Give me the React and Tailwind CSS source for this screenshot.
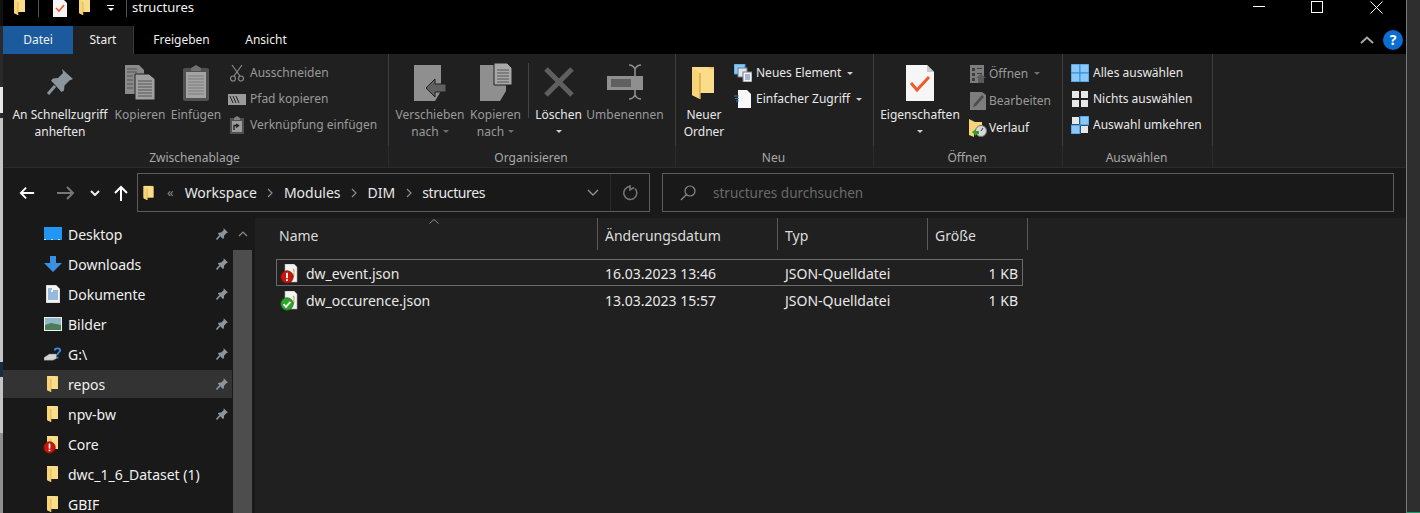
const font = { fontFamily: '"Noto Sans", sans-serif' };

function Folder({ size = 18, className = '' }) {
  return (
    <svg width={size} height={size} viewBox="0 0 18 18" className={className}>
      <path d="M3 1h11v13H3z" fill="#f0c75e" />
      <path d="M3 1h8l1 1v0H14v12H7v3L3 15z" fill="#fbdc8a" />
      <path d="M3 1l4 3v13l-4-2z" fill="#f6d477" />
      <path d="M7 4v13" stroke="#d9ab45" strokeWidth="0.7" />
    </svg>
  );
}

function StatusBadge() {
  return (
    <svg width="13" height="13" viewBox="0 0 14 14">
      <circle cx="7" cy="7" r="6.2" fill="#c4170d" stroke="#7d0f08" strokeWidth="0.8" />
      <rect x="6.1" y="2.8" width="1.8" height="5.4" fill="#fff" />
      <rect x="6.1" y="9.2" width="1.8" height="1.8" fill="#fff" />
    </svg>
  );
}

function JsonFile({ ok }) {
  return (
    <div className="w-[20px] h-[20px] flex items-end">
      <svg width="20" height="20" viewBox="0 0 20 20" className="block">
        <path d="M5 0h9l3 3v15H5z" fill="#f4f4f4" stroke="#a9a9a9" strokeWidth="0.6" />
        <path d="M13 5c1.5 1 1.5 2 1 3.5M13.5 9c1 1 .5 3-.5 4" stroke="#b8a545" strokeWidth="1.1" fill="none" />
        <g transform="translate(0 6)">
          {ok ? (
            <>
              <circle cx="7" cy="7" r="6.2" fill="#2ea62e" stroke="#1a6e1a" strokeWidth="0.8" />
              <path d="M3.6 7.2l2.4 2.6 4.4-5" stroke="#fff" strokeWidth="1.8" fill="none" />
            </>
          ) : (
            <>
              <circle cx="7" cy="7" r="6.2" fill="#c4170d" stroke="#7d0f08" strokeWidth="0.8" />
              <rect x="6.1" y="2.8" width="1.8" height="5.4" fill="#fff" />
              <rect x="6.1" y="9.2" width="1.8" height="1.8" fill="#fff" />
            </>
          )}
        </g>
      </svg>
    </div>
  );
}

function PinSmall() {
  return (
    <svg width="14" height="14" viewBox="0 0 14 14">
      <path d="M8.5 1l4.5 4.5-1.4.6-2.6 2.6-.1 2.6-1 .7L2.9 6.7l.7-1 2.6-.1L8.8 3z" fill="#8b959d" />
      <path d="M5 8.5L1.5 12.5" stroke="#8b959d" strokeWidth="1.6" />
    </svg>
  );
}

function Caret({ color = '#d0d0d0' }) {
  return <span className="inline-block w-0 h-0 border-x-[3.5px] border-x-transparent border-t-[3.5px]" style={{ borderTopColor: color }} />;
}

function Group({ width, label, children }) {
  return (
    <div className="flex flex-col h-full" style={{ width }}>
      <div className="h-[92px] flex border-r border-[#3d3d3d] pt-[3px]">{children}</div>
      <div className="flex-1 border-r border-[#2b2b2b] flex items-center justify-center text-[12px] text-[#a8a8a8] pt-[3px] pr-[2px]">{label}</div>
    </div>
  );
}

function BigButton({ width, icon, lines, dim, caret, ml = 0 }) {
  const color = dim ? 'text-[#9a9a9a]' : 'text-[#e8e8e8]';
  return (
    <div className={`flex flex-col items-center text-[12px] leading-[17px] shrink-0 ${color}`} style={{ width, marginLeft: ml }}>
      <div className="h-[49px] flex items-center justify-center">{icon}</div>
      <div className="whitespace-nowrap">{lines[0]}</div>
      {lines[1] && (
        <div className="whitespace-nowrap flex items-center gap-[4px]">
          {lines[1]}
          {caret && <Caret color="#6e6e6e" />}
        </div>
      )}
      {!lines[1] && caret && <div className="h-[17px] flex items-center"><Caret /></div>}
    </div>
  );
}

function SmallRow({ icon, text, dim, caret, gap = 4, tall }) {
  return (
    <div className={`${tall ? 'h-[27px]' : 'h-[26px]'} flex items-center whitespace-nowrap text-[12px] ${dim ? 'text-[#9a9a9a]' : 'text-[#e8e8e8]'}`}>
      <span className="w-[18px] flex justify-center shrink-0" style={{ marginRight: gap }}>{icon}</span>
      {text}
      {caret && <span className="ml-[6px] flex items-center"><Caret color={dim ? '#6e6e6e' : '#d0d0d0'} /></span>}
    </div>
  );
}

const SelectGrid = ({ fills }) => (
  <svg width="18" height="18" viewBox="0 0 18 18">
    <rect width="18" height="18" fill={fills.some(Boolean) ? '#3b9ae6' : 'none'} opacity={fills.every(Boolean) ? 1 : 0} />
    {[[1, 1], [10, 1], [1, 10], [10, 10]].map(([x, y], i) => (
      <rect key={i} x={x - (fills[i] ? 1 : 0)} y={y - (fills[i] ? 1 : 0)} width={fills[i] ? 9 : 7} height={fills[i] ? 9 : 7} fill={fills[i] ? '#8cc8f5' : '#e8e8e8'} stroke={fills[i] ? '#2f8fe0' : 'none'} />
    ))}
  </svg>
);

function Ribbon() {
  return (
    <div className="h-[114px] bg-[#202020] flex border-b border-[#2b2b2b]">
      <Group width={386} label="Zwischenablage">
        <BigButton
          width={112}
          ml={1}
          lines={['An Schnellzugriff', 'anheften']}
          icon={
            <svg width="28" height="28" viewBox="0 0 28 28">
              <path d="M16 1l11 10-3.5 1.5-5 5-.5 5-2.5 1.500L5 12.500 7 10.500l5-.5 5-5z" fill="#8b959d" />
              <path d="M9 18L2 26" stroke="#8b959d" strokeWidth="3" />
            </svg>
          }
        />
        <BigButton
          width={48}
          dim
          lines={['Kopieren']}
          icon={
            <svg width="30" height="36" viewBox="0 0 30 36" className="mt-[2px]">
              <path d="M0 0h14l5 5v24H0z" fill="#8a8a8a" />
              <path d="M10 9h14l6 5v21H10z" fill="#a0a0a0" stroke="#202020" />
              <path d="M2 4h10M2 7h10M2 11h6M2 15h6M2 19h6M2 23h6M13 16h14M13 19h14M13 22h14M13 25h14M13 28h14M13 31h14" stroke="#555" />
            </svg>
          }
        />
        <BigButton
          width={64}
          dim
          lines={['Einfügen']}
          icon={
            <svg width="26" height="36" viewBox="0 0 26 36" className="mt-[2px]">
              <rect y="3" width="26" height="33" rx="2" fill="#505050" />
              <path d="M8 3l5-3 5 3v3H8z" fill="#707070" />
              <rect x="3" y="7" width="20" height="26" fill="#a4a4a4" />
              <path d="M5 11h16M5 14h16M5 17h16M5 20h16M5 23h16M5 26h16M5 29h16" stroke="#7b7b7b" />
            </svg>
          }
        />
        <div className="pt-[3px]">
          <SmallRow
            dim
            text="Ausschneiden"
            icon={
              <svg width="14" height="18" viewBox="0 0 14 18" fill="none" stroke="#8a8a8a" strokeWidth="1.200">
                <path d="M2 1l8 11M12 1L4 12" />
                <circle cx="3" cy="14.500" r="2.500" />
                <circle cx="11" cy="14.500" r="2.500" />
              </svg>
            }
          />
          <SmallRow
            dim
            text="Pfad kopieren"
            icon={
              <svg width="18" height="11" viewBox="0 0 18 11">
                <rect width="18" height="11" fill="#9a9a9a" />
                <path d="M2 2l3 7M5 2l3 7M8 2l3 7" stroke="#222" strokeWidth="1" />
              </svg>
            }
          />
          <SmallRow
            dim
            text="Verknüpfung einfügen"
            icon={
              <svg width="14" height="18" viewBox="0 0 14 18">
                <rect y="2" width="14" height="16" fill="#505050" />
                <path d="M4 2l3-2 3 2v2H4z" fill="#808080" />
                <rect x="2" y="5" width="10" height="11" fill="#9c9c9c" />
                <path d="M4 14V9.500h4M6 8l2.500 1.500L6 11.500" stroke="#222" strokeWidth="1.400" fill="none" />
              </svg>
            }
          />
        </div>
      </Group>
      <Group width={287} label="Organisieren">
        <BigButton
          width={72}
          ml={5}
          dim
          caret
          lines={['Verschieben', 'nach']}
          icon={
            <svg width="32" height="36" viewBox="0 0 32 36" className="mt-[2px]">
              <path d="M0 0h27v26l-6 10H0z" fill="#8f8f8f" />
              <path d="M12 23l9-9v5h11v8H21v5z" fill="#606060" stroke="#1f1f1f" />
            </svg>
          }
        />
        <BigButton
          width={59}
          dim
          caret
          lines={['Kopieren', 'nach']}
          icon={
            <svg width="32" height="38" viewBox="0 0 32 38">
              <path d="M0 2h26v26l-6 10H0z" fill="#8f8f8f" />
              <path d="M14 0h13l5 5v17H14z" fill="#a8a8a8" stroke="#202020" />
              <path d="M17 7h12M17 10h12M17 13h12M17 16h12M17 19h12" stroke="#555" />
            </svg>
          }
        />
        <div className="w-px h-[55px] mt-[6px] bg-[#454545] mx-[3px] shrink-0" />
        <BigButton
          width={53}
          caret
          lines={['Löschen']}
          icon={
            <svg width="30" height="30" viewBox="0 0 30 30">
              <path d="M2 2l26 26M28 2L2 28" stroke="#5f5f5f" strokeWidth="5" />
            </svg>
          }
        />
        <BigButton
          width={80}
          dim
          lines={['Umbenennen']}
          icon={
            <svg width="36" height="36" viewBox="0 0 36 36" className="mt-[1px]">
              <rect y="12" width="36" height="14" fill="#8f8f8f" />
              <rect x="4" y="15" width="20" height="8" fill="#606060" />
              <path d="M22 1c4 0 5 2 6 4 1-2 2-4 6-4M28 5v28M22 35c4 0 5-2 6-4 1 2 2 4 6 4" stroke="#8f8f8f" strokeWidth="1.600" fill="none" />
            </svg>
          }
        />
      </Group>
      <Group width={198} label="Neu">
        <BigButton width={56} lines={['Neuer', 'Ordner']} icon={<Folder size={36} className="mt-[2px]" />} />
        <div className="ml-[2px] pt-[3px]">
          <SmallRow
            text="Neues Element"
            caret
            icon={
              <svg width="18" height="18" viewBox="0 0 18 18">
                <rect width="11" height="10" fill="#8cc8f5" stroke="#3b9ae6" />
                <rect x="4" y="4" width="9" height="9" fill="#d8e8f5" stroke="#7a7a7a" />
                <rect x="9" y="8" width="9" height="10" fill="#f4f4f4" stroke="#7a7a7a" />
                <path d="M11 11h5M11 13h5M11 15h5" stroke="#5577aa" />
              </svg>
            }
          />
          <SmallRow
            text="Einfacher Zugriff"
            caret
            icon={
              <svg width="18" height="18" viewBox="0 0 18 18">
                <path d="M4 0h9l4 4v14H4z" fill="#f8f8f8" />
                <path d="M0 6h5M1 8.500h4M2 11h3" stroke="#2a80d8" strokeWidth="1.200" />
              </svg>
            }
          />
        </div>
      </Group>
      <Group width={189} label="Öffnen">
        <BigButton
          width={92}
          caret
          lines={['Eigenschaften']}
          icon={
            <svg width="28" height="36" viewBox="0 0 28 36" className="mt-[2px]">
              <path d="M0 0h21l7 7v29H0z" fill="#f6f6f6" />
              <path d="M21 0v7h7z" fill="#c8c8c8" />
              <path d="M5 18l6 7 12-13" stroke="#ef5b25" strokeWidth="3" fill="none" />
            </svg>
          }
        />
        <div className="ml-[3px] pt-[3px]">
          <SmallRow
            dim
            tall
            text="Öffnen"
            caret
            gap={2}
            icon={
              <svg width="16" height="18" viewBox="0 0 16 18">
                <rect width="14" height="18" fill="#7d7d7d" />
                <path d="M2 3h3v3H2zM7 3h5v1H7zM2 8h3v3H2zM7 8h5v1H7zM2 13h3v3H2z" fill="#3d3d3d" />
                <path d="M8 18v-5H6l5-4 5 4h-2v5z" fill="#5a5a5a" />
              </svg>
            }
          />
          <SmallRow
            dim
            tall
            text="Bearbeiten"
            gap={2}
            icon={
              <svg width="16" height="18" viewBox="0 0 16 18">
                <path d="M0 0h12l4 3v15H0z" fill="#7d7d7d" />
                <path d="M3 15l1-3 8-9 2 2-8 9z" fill="#4d4d4d" />
              </svg>
            }
          />
          <SmallRow
            tall
            text="Verlauf"
            gap={2}
            icon={
              <svg width="18" height="18" viewBox="0 0 18 18">
                <path d="M0 0l6 3h7v12H5v3l-5-2z" fill="#f6d477" />
                <circle cx="12" cy="12" r="5.500" fill="#d8d8d8" stroke="#777" />
                <path d="M12 12l2-3" stroke="#333" />
                <path d="M3 13l4-3v2h3v3H7v2z" fill="#33a02c" />
              </svg>
            }
          />
        </div>
      </Group>
      <Group width={150} label="Auswählen">
        <div className="ml-[8px] pt-[3px]">
          <SmallRow text="Alles auswählen" icon={<SelectGrid fills={[1, 1, 1, 1]} />} />
          <SmallRow text="Nichts auswählen" icon={<SelectGrid fills={[0, 0, 0, 0]} />} />
          <SmallRow text="Auswahl umkehren" icon={<SelectGrid fills={[0, 1, 1, 0]} />} />
        </div>
      </Group>
    </div>
  );
}

function TitleBar() {
  return (
    <div className="h-[26px] bg-black flex items-start overflow-hidden text-white">
      <div className="ml-[8px] -mt-[2px]"><Folder size={18} /></div>
      <div className="ml-[9px] w-px h-[17px] bg-[#555]" />
      <svg width="14" height="18" viewBox="0 0 14 18" className="ml-[14px] -mt-[1px] shrink-0">
        <path d="M0 0h10l4 4v14H0z" fill="#f4f4f4" />
        <path d="M3 9l3 3 5-6" stroke="#ef5b25" strokeWidth="1.600" fill="none" />
      </svg>
      <div className="ml-[9px] -mt-[2px]"><Folder size={18} /></div>
      <div className="ml-[13px] mt-[5px] flex flex-col items-center w-[7px]">
        <div className="w-[7px] h-px bg-white mb-[2px]" />
        <Caret color="#fff" />
      </div>
      <div className="ml-[12px] w-px h-[17px] bg-[#555]" />
      <div className="ml-[5px] text-[13px] leading-[15px] whitespace-nowrap text-[#f2f2f2]">structures</div>
      <div className="ml-auto flex items-start">
        <div className="w-[12px] h-px bg-white mt-[6px] mr-[46px]" />
        <div className="w-[12px] h-[12px] border border-white mt-[1px] mr-[47px]" />
        <svg width="13" height="13" viewBox="0 0 13 13" className="mt-[1px] mr-[23px]" stroke="#fff" strokeWidth="1">
          <path d="M.5.5l12 12M12.500.5l-12 12" />
        </svg>
      </div>
    </div>
  );
}

function Tabs() {
  return (
    <div className="h-[28px] bg-black flex items-stretch text-[12px] text-[#eee]">
      <div className="w-[70px] bg-[#1c5a9e] flex items-center justify-center">Datei</div>
      <div className="w-[61px] bg-[#202020] border-r border-[#3a3a3a] flex items-center justify-center">Start</div>
      <div className="w-[95px] flex items-center justify-center">Freigeben</div>
      <div className="w-[74px] flex items-center justify-center">Ansicht</div>
      <div className="ml-auto flex items-center mr-[3px]">
        <svg width="14" height="8" viewBox="0 0 14 8" className="mr-[9px]">
          <path d="M1 7l6-5.500L13 7" stroke="#a8a8a8" strokeWidth="2" fill="none" />
        </svg>
        <div className="w-[20px] h-[20px] rounded-full bg-[#0a6fd0] flex items-center justify-center text-white text-[14px] font-bold leading-none">?</div>
      </div>
    </div>
  );
}

function Crumb({ children, ml, className = '' }) {
  return (
    <span className={`text-[#e8e8e8] text-[14px] whitespace-nowrap ${className}`} style={{ marginLeft: ml }}>{children}</span>
  );
}

function Sep() {
  return (
    <svg width="6" height="10" viewBox="0 0 6 10" className="mx-[10.5px] shrink-0" fill="none" stroke="#8a8a8a" strokeWidth="1.200">
      <path d="M1 1l4 4-4 4" />
    </svg>
  );
}

function NavBar() {
  return (
    <div className="h-[50px] bg-[#191919] flex items-center pb-[1px]">
      <svg width="16" height="14" viewBox="0 0 18 14" className="ml-[16px] shrink-0" fill="none" stroke="#fff" strokeWidth="2">
        <path d="M17 7H2M8 1L2 7l6 6" />
      </svg>
      <svg width="18" height="14" viewBox="0 0 18 14" className="ml-[22px] shrink-0" fill="none" stroke="#777" strokeWidth="2">
        <path d="M0 7h16M10 1l6 6-6 6" />
      </svg>
      <svg width="10" height="6" viewBox="0 0 10 6" className="ml-[15px] shrink-0" fill="none" stroke="#eee" strokeWidth="2">
        <path d="M1 1l4 4 4-4" />
      </svg>
      <svg width="14" height="16" viewBox="0 0 14 16" className="ml-[14px] shrink-0" fill="none" stroke="#fff" strokeWidth="2">
        <path d="M7 16V2M1 8l6-6 6 6" />
      </svg>
      <div className="ml-[9px] w-[513px] h-[39px] border border-[#5c5c5c] flex items-center shrink-0">
        <Folder size={16} className="ml-[3px] shrink-0" />
        <span className="ml-[10px] text-[#8a8a8a] text-[13px] leading-none">«</span>
        <Crumb ml={11}>Workspace</Crumb>
        <Sep />
        <Crumb>Modules</Crumb>
        <Sep />
        <Crumb>DIM</Crumb>
        <Sep />
        <Crumb className="tracking-[-0.4px]">structures</Crumb>
        <svg width="12" height="7" viewBox="0 0 12 7" className="ml-auto mr-[11px] shrink-0" fill="none" stroke="#909090" strokeWidth="1.400">
          <path d="M1 1l5 5 5-5" />
        </svg>
        <div className="w-[39px] h-full border-l border-[#2a2a2a] flex items-center justify-center shrink-0">
          <svg width="16" height="16" viewBox="0 0 16 16" fill="none" stroke="#777" strokeWidth="1.500">
            <path d="M13 3.500A6.500 6.500 0 1 1 8 1.500M8 0v5l4-2.500" />
          </svg>
        </div>
      </div>
      <div className="ml-[12px] w-[732px] h-[39px] border border-[#5c5c5c] flex items-center shrink-0">
        <svg width="16" height="16" viewBox="0 0 16 16" className="ml-[17px] shrink-0" fill="none" stroke="#8a8a8a" strokeWidth="1.200">
          <circle cx="10" cy="6" r="5" />
          <path d="M6.500 9.500L1 15" />
        </svg>
        <span className="ml-[17px] pt-[2px] text-[13.5px] text-[#6a6a6a] whitespace-nowrap">structures durchsuchen</span>
      </div>
    </div>
  );
}

const sidebarItems = [
  { name: 'Desktop', pin: true, icon: (
    <svg width="18" height="14" viewBox="0 0 18 14"><rect width="18" height="13" fill="#2196f3" /><path d="M0 12.500h18" stroke="#cde" strokeDasharray="2 5" /></svg>
  ) },
  { name: 'Downloads', pin: true, icon: (
    <svg width="18" height="16" viewBox="0 0 18 16"><path d="M6 0h6v7h6l-9 9-9-9h6z" fill="#3a8fe0" /></svg>
  ) },
  { name: 'Dokumente', pin: true, icon: (
    <svg width="14" height="18" viewBox="0 0 14 18">
      <path d="M0 0h10l4 4v14H0z" fill="#f4f4f4" stroke="#999" strokeWidth="0.500" />
      <path d="M2 4h4M2 6h3M7 6h5M2 8h10M2 10h10M2 12h10M2 14h10" stroke="#3a7fc8" />
    </svg>
  ) },
  { name: 'Bilder', pin: true, icon: (
    <svg width="18" height="14" viewBox="0 0 18 14">
      <rect width="18" height="14" fill="#f0f0f0" />
      <rect x="1" y="1" width="16" height="12" fill="#8fb8c8" />
      <path d="M1 8l6-2 10 2v5H1z" fill="#4d7a5a" />
    </svg>
  ) },
  { name: 'G:\\', pin: true, icon: (
    <svg width="20" height="18" viewBox="0 0 20 18">
      <path d="M0 13l6-4h8v5l-4 2H0z" fill="#d4d4d4" stroke="#777" strokeWidth="0.500" />
      <path d="M12 5c0-3 6-3 6 0 0 2-3 2-3 5M15 12v2" stroke="#3a8fe0" strokeWidth="2" fill="none" />
    </svg>
  ) },
  { name: 'repos', pin: true, active: true, folder: true },
  { name: 'npv-bw', pin: true, folder: true },
  { name: 'Core', folder: true, badge: true },
  { name: 'dwc_1_6_Dataset (1)', folder: true },
  { name: 'GBIF', folder: true },
];

function Sidebar() {
  return (
    <div className="w-[252px] h-full bg-[#191919] flex shrink-0 overflow-hidden">
      <div className="w-[229px] pt-[2px] flex flex-col gap-[2px] shrink-0">
        {sidebarItems.map(item => (
          <div key={item.name} className={`h-[28px] shrink-0 flex items-center pl-[1px] ${item.active ? 'bg-[#333333]' : ''}`}>
            <div className="w-[40px] shrink-0" />
            <div className="w-[18px] mr-[6px] h-[20px] flex items-center justify-center shrink-0">
              {item.folder ? (
                item.badge ? (
                  <div className="relative w-[18px] h-[18px]">
                    <Folder size={18} />
                    <div className="absolute left-[-1px] top-[6px]"><StatusBadge /></div>
                  </div>
                ) : <Folder size={18} />
              ) : item.icon}
            </div>
            <span className="text-[14px] text-[#f0f0f0] whitespace-nowrap">{item.name}</span>
            {item.pin && <span className="ml-auto mr-[3px] flex"><PinSmall /></span>}
          </div>
        ))}
      </div>
      <div className="ml-[1px] w-[19px] flex flex-col shrink-0">
        <div className="h-[32px] flex items-center justify-center">
          <svg width="10" height="6" viewBox="0 0 10 6" fill="none" stroke="#8a8a8a" strokeWidth="1.200"><path d="M1 5l4-4 4 4" /></svg>
        </div>
        <div className="flex-1 bg-[#4d4d4d]" />
      </div>
    </div>
  );
}

const columns = [
  { label: 'Änderungsdatum', w: 180 },
  { label: 'Typ', w: 150 },
  { label: 'Größe', w: 100 },
];

const files = [
  { name: 'dw_event.json', date: '16.03.2023 13:46', type: 'JSON-Quelldatei', size: '1 KB', ok: false, focus: true },
  { name: 'dw_occurence.json', date: '13.03.2023 15:57', type: 'JSON-Quelldatei', size: '1 KB', ok: true },
];

function FileList() {
  return (
    <div className="flex-1 h-full bg-[#202020] text-[14px]">
      <div className="h-[32px] flex">
        <div className="w-[343px] border-r border-[#5a5a5a] h-[32px] pl-[24px] relative">
          <svg width="10" height="5" viewBox="0 0 10 5" className="absolute left-[174px] top-[1px]" fill="none" stroke="#8a8a8a"><path d="M.5 4.500L5 .5l4.500 4" /></svg>
          <span className="leading-[35px] text-[#dcdcdc]">Name</span>
        </div>
        {columns.map(c => (
          <div key={c.label} className="border-r border-[#5a5a5a] pl-[7px] leading-[35px] text-[#dcdcdc] shrink-0" style={{ width: c.w }}>{c.label}</div>
        ))}
      </div>
      <div className="mt-[9px]">
        {files.map(f => (
          <div key={f.name} className={`ml-[21px] w-[747px] h-[27px] pt-[2px] flex items-center text-[#e8e8e8] border ${f.focus ? 'border-[#6b6b6b]' : 'border-transparent'}`}>
            <div className="w-[29px] pl-[3px] shrink-0"><JsonFile ok={f.ok} /></div>
            <div className="w-[299px] shrink-0">{f.name}</div>
            <div className="w-[180px] shrink-0">{f.date}</div>
            <div className="w-[150px] shrink-0">{f.type}</div>
            <div className="w-[83px] text-right shrink-0">{f.size}</div>
          </div>
        ))}
      </div>
    </div>
  );
}

export default function App() {
  return (
    <div className="w-[1420px] h-[513px] flex overflow-hidden bg-[#191919]" style={font}>
      <div className="w-[3px] flex flex-col shrink-0">
        <div className="h-[26px] bg-[#111111]" />
        <div className="h-[61px] bg-[#2a2a2a]" />
        <div className="h-[26px] bg-[#e8e8e8]" />
        <div className="h-[5px] bg-[#2a2a2a]" />
        <div className="h-[244px] bg-[#c4c4c4]" />
        <div className="h-[15px] bg-[#1b2a44]" />
        <div className="h-[56px] bg-[#c4c4c4]" />
        <div className="flex-1 bg-[#8f8f8f]" />
      </div>
      <div className="w-[1403px] flex flex-col shrink-0">
        <TitleBar />
        <Tabs />
        <Ribbon />
        <NavBar />
        <div className="flex-1 flex min-h-0">
          <Sidebar />
          <FileList />
        </div>
      </div>
      <div className="flex-1 border-l border-[#7a7a7a] bg-[#2e2e2e] flex flex-col justify-end">
        <div className="h-px bg-[#1a9a6c]" />
      </div>
    </div>
  );
}
